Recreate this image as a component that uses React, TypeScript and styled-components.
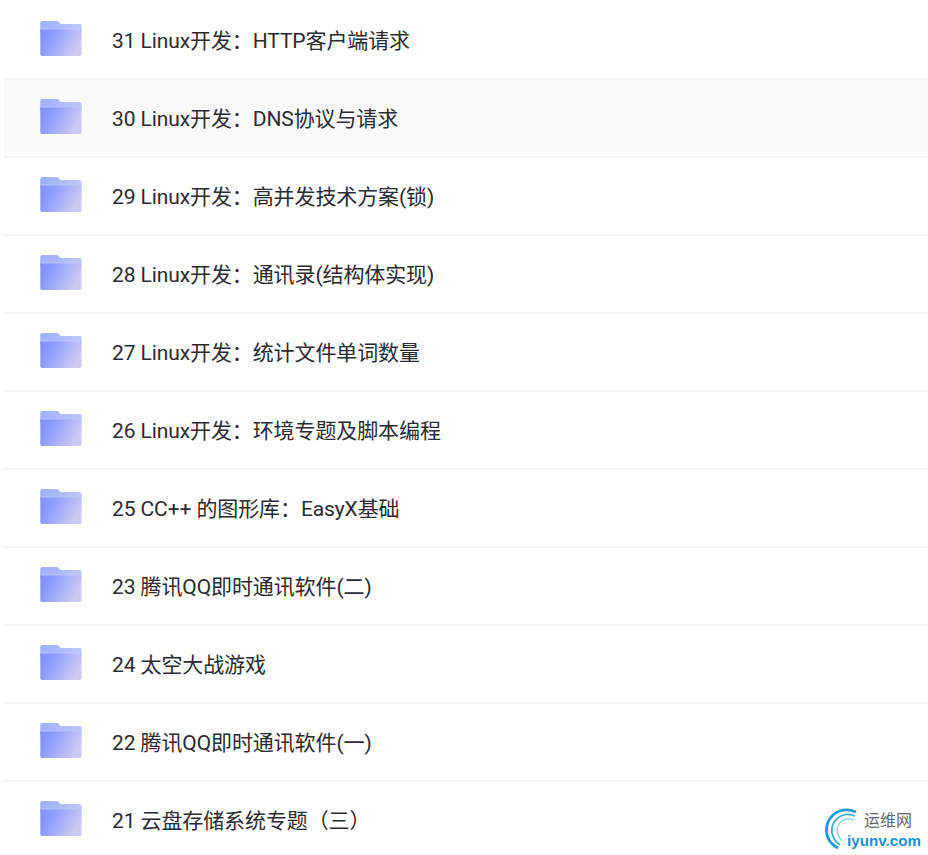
import React from 'react'
import styled, { createGlobalStyle } from 'styled-components'

const folders = [
  '31 Linux开发：HTTP客户端请求',
  '30 Linux开发：DNS协议与请求',
  '29 Linux开发：高并发技术方案(锁)',
  '28 Linux开发：通讯录(结构体实现)',
  '27 Linux开发：统计文件单词数量',
  '26 Linux开发：环境专题及脚本编程',
  '25 CC++ 的图形库：EasyX基础',
  '23 腾讯QQ即时通讯软件(二)',
  '24 太空大战游戏',
  '22 腾讯QQ即时通讯软件(一)',
  '21 云盘存储系统专题（三）',
]

const FolderIcon = ({ id }: { id: number }) => (
  <SIcon viewBox="0 0.5 42 35.5" aria-hidden="true">
    <defs>
      <linearGradient id={`front${id}`} x1="0" y1="0" x2="1" y2="0.35">
        <stop offset="0" stopColor="#7f90ff" />
        <stop offset="0.3" stopColor="#8a9aff" />
        <stop offset="1" stopColor="#ccc9f2" />
      </linearGradient>
      <linearGradient id={`back${id}`} x1="0" y1="0" x2="1" y2="0">
        <stop offset="0" stopColor="#9db0ff" />
        <stop offset="1" stopColor="#bfc6fa" />
      </linearGradient>
    </defs>
    <path
      d="M2 0.5H16.5C17.6 0.5 18.2 1 19 1.8L20.5 3.5H40C41.2 3.5 42 4.3 42 5.5V12H0V2.5C0 1.3 0.8 0.5 2 0.5Z"
      fill={`url(#back${id})`}
    />
    <path d="M0 8.5H42V34C42 35.2 41.2 36 40 36H2C0.8 36 0 35.2 0 34Z" fill={`url(#front${id})`} />
    <path d="M0 8H42V9H0Z" fill="#c3ccff" opacity="0.75" />
  </SIcon>
)

const Logo = () => (
  <SLogo viewBox="0 0 34 42" aria-hidden="true">
    <path d="M13 41C3 36 -1 26 3 15C8 4 20 0 31 5" fill="none" stroke="#1b9ad8" strokeWidth="2.8" />
    <path d="M15 38C8 33 5 25 8 17C12 9 21 5 30 9" fill="none" stroke="#35aee6" strokeWidth="1.7" />
    <path d="M17 34C12 29 11 23 13 19C16 13 23 10 29 13" fill="none" stroke="#7fcdf0" strokeWidth="1.2" />
  </SLogo>
)

export default function App() {
  return (
    <>
      <GlobalStyle />
      <SList>
        {folders.map((name, i) => (
          <SRow key={name} $active={i === 1}>
            <FolderIcon id={i} />
            <SName>{name}</SName>
          </SRow>
        ))}
      </SList>
      <SWatermark>
        <Logo />
        <SMarkText>
          <SMarkCn>运维网</SMarkCn>
          <SMarkEn>iyunv.com</SMarkEn>
        </SMarkText>
      </SWatermark>
    </>
  )
}

const GlobalStyle = createGlobalStyle`
  html, body {
    margin: 0;
    height: 855px;
    overflow: hidden;
    background: #fff;
  }
  body {
    font-family: Roboto, "Noto Sans CJK SC", sans-serif;
    position: relative;
  }
`

const SList = styled.div`
  padding: 2px 0 0 4px;
`

const SRow = styled.div<{ $active?: boolean }>`
  display: flex;
  align-items: center;
  height: 76px;
  padding-left: 36px;
  background: ${({ $active }) => ($active ? '#fafafa' : '#fff')};
  border-bottom: 2px solid #f5f5f5;
`

const SIcon = styled.svg`
  width: 42px;
  height: 35px;
  flex: none;
  margin-right: 30px;
  position: relative;
  top: -1.5px;
`

const SName = styled.span`
  font-size: 21px;
  line-height: 28px;
  padding-top: 2px;
  letter-spacing: -0.1px;
  color: #2b2b33;
  white-space: nowrap;
`

const SWatermark = styled.div`
  position: absolute;
  left: 825px;
  top: 807px;
  width: 103px;
  height: 42px;
`

const SLogo = styled.svg`
  width: 34px;
  height: 42px;
  display: block;
`

const SMarkText = styled.div`
  position: absolute;
  left: 0;
  top: 4px;
  width: 96px;
  text-align: right;
`

const SMarkCn = styled.div`
  font-size: 16px;
  line-height: 20px;
  color: #666;
  margin-right: 9px;
`

const SMarkEn = styled.div`
  font-family: "Liberation Sans", sans-serif;
  font-size: 15.2px;
  font-weight: 700;
  line-height: 18px;
  margin-top: 1px;
  color: #1a8fdc;
`
